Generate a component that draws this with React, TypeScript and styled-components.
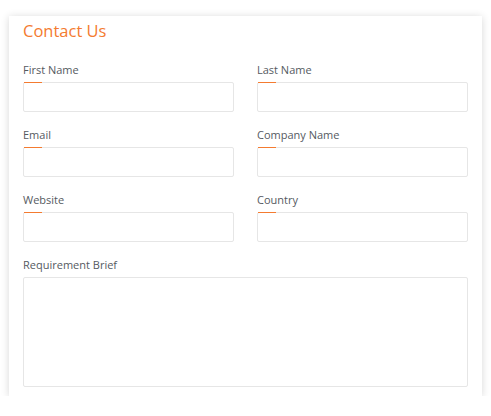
import React from "react";
import styled, { createGlobalStyle } from "styled-components";

const Global = createGlobalStyle`
  html, body { margin: 0; padding: 0; background: #ffffff; }
  body { font-family: "Open Sans", "Noto Sans", sans-serif; }
  * { box-sizing: border-box; }
`;

const Page = styled.div`
  padding: 16px 9px 0 9px;
`;

const Card = styled.form`
  background: #fff;
  box-shadow: 0 1px 8px rgba(0, 0, 0, 0.16);
  padding: 3px 13px 9px 14px;
`;

const Title = styled.h2`
  margin: 0 0 19px 0;
  font-size: 16.5px;
  line-height: 24px;
  font-weight: 400;
  color: #f47b30;
`;

const Grid = styled.div`
  display: grid;
  grid-template-columns: 211px 211px;
  column-gap: 23px;
  row-gap: 15px;
`;

const Field = styled.div<{ $full?: boolean }>`
  display: flex;
  flex-direction: column;
  grid-column: ${(p) => (p.$full ? "1 / -1" : "auto")};
`;

const Label = styled.label`
  font-size: 11px;
  line-height: 16px;
  color: #555a5f;
  margin-bottom: 4px;
`;

const InputWrap = styled.div`
  position: relative;
`;

const Accent = styled.span`
  position: absolute;
  left: 1px;
  top: 0;
  width: 18px;
  height: 1px;
  background: #f47b30;
`;

const Input = styled.input`
  display: block;
  width: 100%;
  height: 30px;
  border: 1px solid #e6e6e6;
  border-radius: 2px;
  background: #fff;
  outline: none;
  padding: 0 8px;
  font: inherit;
`;

const TextArea = styled.textarea`
  display: block;
  width: 100%;
  height: 110px;
  border: 1px solid #e6e6e6;
  border-radius: 2px;
  background: #fff;
  outline: none;
  resize: none;
  padding: 6px 8px;
  font: inherit;
`;

const fields = [
  "First Name",
  "Last Name",
  "Email",
  "Company Name",
  "Website",
  "Country",
];

export default function App() {
  return (
    <>
      <Global />
      <Page>
        <Card onSubmit={(e) => e.preventDefault()}>
          <Title>Contact Us</Title>
          <Grid>
            {fields.map((f) => (
              <Field key={f}>
                <Label>{f}</Label>
                <InputWrap>
                  <Input type="text" />
                  <Accent />
                </InputWrap>
              </Field>
            ))}
            <Field $full>
              <Label>Requirement Brief</Label>
              <TextArea />
            </Field>
          </Grid>
        </Card>
      </Page>
    </>
  );
}
